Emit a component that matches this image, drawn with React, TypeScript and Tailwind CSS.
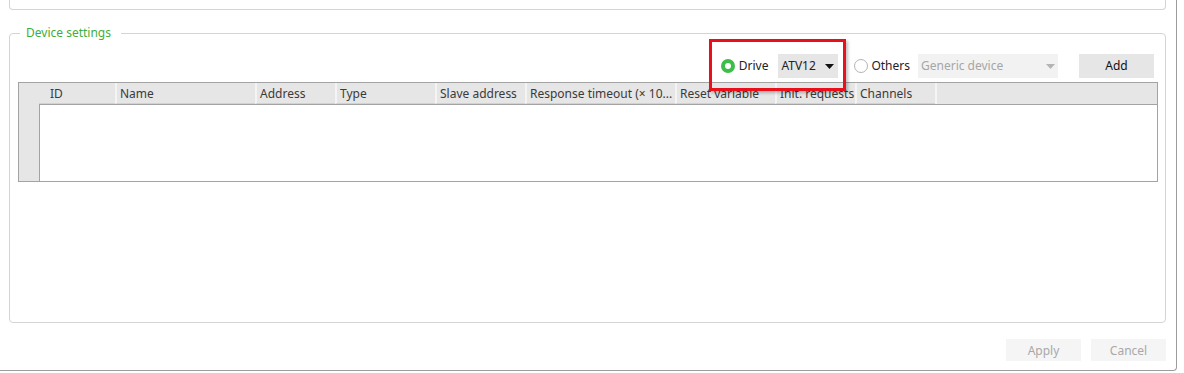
import React from "react";

const columns = [
  { label: "ID", w: "w-[76px]", first: true },
  { label: "Name", w: "w-[140px]" },
  { label: "Address", w: "w-[80px]" },
  { label: "Type", w: "w-[100px]" },
  { label: "Slave address", w: "w-[90px]" },
  { label: "Response timeout (× 10...", w: "w-[150px]" },
  { label: "Reset variable", w: "w-[100px]" },
  { label: "Init. requests", w: "w-[80px]" },
  { label: "Channels", w: "w-[80px]" },
];

const Caret = ({ color }: { color: string }) => (
  <svg width="9" height="5" viewBox="0 0 9 5">
    <path d="M0 0 L9 0 L4.5 5 Z" fill={color} />
  </svg>
);

export default function App() {
  return (
    <div className="relative h-[373px] w-[1184px] overflow-hidden bg-white font-['Segoe_UI','Noto_Sans',sans-serif] text-[12px] text-[#222]">
      {/* window frame */}
      <div className="flex h-[371px] w-[1177px] flex-col rounded-br-[4px] border-r border-b border-[#9c9c9c]">
        {/* previous panel, cut off at the top */}
        <div className="ml-[9px] h-[10px] w-[1157px] rounded-b-[4px] border-x border-b border-[#d4d4d4]" />

        <fieldset className="ml-[9px] mt-[14px] h-[299px] w-[1157px] rounded-[4px] border border-[#d4d4d4]">
          <legend className="ml-[10px] px-[6px] pr-[10px] leading-[18px] text-[#3fae3a]">
            Device settings
          </legend>

          <div className="mt-[12px] flex h-[24px] items-center justify-end pr-[11px]">
            <div className="flex items-center gap-[4px]">
              <span className="flex h-[14px] w-[14px] items-center justify-center rounded-full bg-[#3dbd4a]">
                <span className="h-[6px] w-[6px] rounded-full bg-white" />
              </span>
              <span>Drive</span>
            </div>
            <div className="ml-[10px] flex h-[24px] w-[60px] items-center justify-between bg-[#e6e6e6] pl-[3px] pr-[4px]">
              <span>ATV12</span>
              <Caret color="#111" />
            </div>
            <div className="ml-[16px] flex items-center gap-[3px]">
              <span className="h-[14px] w-[14px] rounded-full border border-[#b4b4b4] bg-white" />
              <span>Others</span>
            </div>
            <div className="ml-[8px] flex h-[24px] w-[140px] items-center justify-between bg-[#f2f2f2] pl-[3px] pr-[3px] text-[#a6a6a6]">
              <span>Generic device</span>
              <Caret color="#b4b4b4" />
            </div>
            <button className="ml-[21px] h-[24px] w-[75px] bg-[#e6e6e6] text-[#111]">Add</button>
          </div>

          {/* device table */}
          <div className="ml-[8px] mt-[4px] flex h-[100px] w-[1140px] border border-[#a3a3a3]">
            <div className="w-[20px] bg-[#e6e6e6]" />
            <div className="flex flex-1 flex-col">
              <div className="flex h-[21px] bg-[#e6e6e6]">
                {columns.map((c) => (
                  <div
                    key={c.label}
                    className={`${c.w} flex items-center border-b border-[#d2d2d2] pt-[2px] text-[#3a3a3a] whitespace-nowrap overflow-hidden ${
                      c.first ? "pl-[11px]" : "border-l-2 border-l-[#f4f4f4] pl-[3px]"
                    }`}
                  >
                    {c.label}
                  </div>
                ))}
                <div className="flex-1 border-l-2 border-l-[#f4f4f4]" />
              </div>
              <div className="flex-1 border-t border-l border-[#a3a3a3] bg-white" />
            </div>
          </div>
        </fieldset>

        <div className="mt-[16px] flex justify-end gap-[10px] pr-[10px]">
          <button className="h-[22px] w-[75px] bg-[#f5f5f5] pt-[1px] text-[#a8a8a8]">Apply</button>
          <button className="h-[22px] w-[75px] bg-[#f5f5f5] pt-[1px] text-[#a8a8a8]">Cancel</button>
        </div>
      </div>

      {/* red highlight annotation */}
      <div className="absolute left-[709px] top-[39px] h-[52px] w-[137px] border-[3px] border-[#e8101a] shadow-[2px_2px_3px_rgba(0,0,0,0.25)]" />
    </div>
  );
}
